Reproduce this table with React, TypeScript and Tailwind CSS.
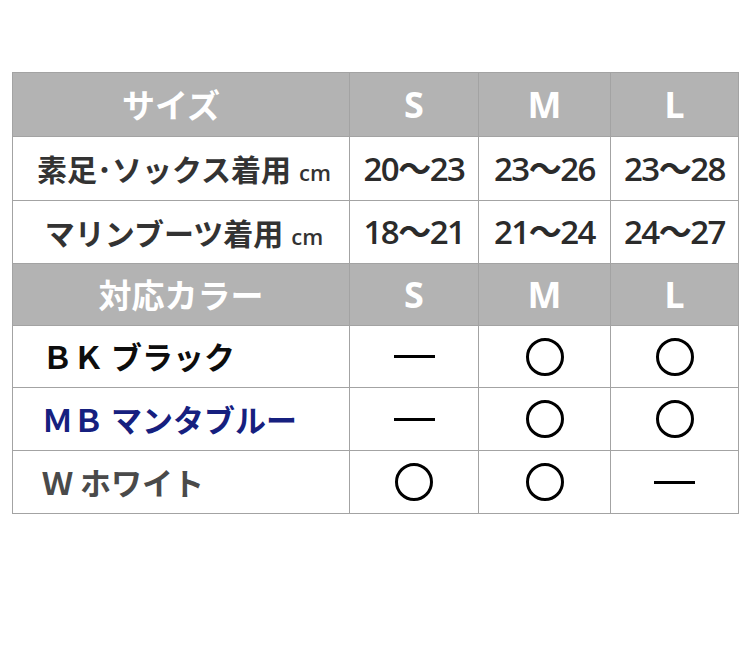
const jp = "font-['Noto_Sans_CJK_JP',sans-serif]";
const latin = "font-['Open_Sans','Noto_Sans_CJK_JP',sans-serif]";

const sizeRows = [
  { label: "素足･ソックス着用", values: ["20〜23", "23〜26", "23〜28"] },
  { label: "マリンブーツ着用", values: ["18〜21", "21〜24", "24〜27"] },
];

const colorRows = [
  { code: "ＢＫ", name: "ブラック", color: "text-[#0d0d0d]", marks: ["dash", "circle", "circle"] },
  { code: "ＭＢ", name: "マンタブルー", color: "text-[#16207f]", marks: ["dash", "circle", "circle"] },
  { code: "Ｗ", name: "ホワイト", color: "text-[#4a4a4a]", marks: ["circle", "circle", "dash"] },
];

function Mark({ type }: { type: string }) {
  if (type === "circle") {
    return <div className="w-[38px] h-[38px] rounded-full border-[3px] border-black" />;
  }
  return <div className="w-[41px] h-[3px] bg-black" />;
}

function HeaderRow({ title, h, shift }: { title: string; h: string; shift?: boolean }) {
  return (
    <>
      <div className={`${h} bg-[#b3b3b3] flex items-center justify-center text-white text-[33px] font-bold ${shift ? "pr-[20px]" : ""} ${jp}`}>
        {title}
      </div>
      {["S", "M", "L"].map((s) => (
        <div key={s} className={`${h} bg-[#b3b3b3] flex items-center justify-center text-white text-[36px] font-bold ${latin}`}>
          {s}
        </div>
      ))}
    </>
  );
}

export default function App() {
  return (
    <div className="w-[750px] h-[654px] bg-white pt-[72px] pl-[12px]">
      <div className="grid grid-cols-[336px_128px_131px_127px] gap-px bg-[#a3a3a3] p-px w-[727px]">
        <HeaderRow title="サイズ" h="h-[63px]" shift />
        {sizeRows.map((row, i) => (
          <div key={row.label} className="contents">
            <div className={`${i === 0 ? "h-[63px]" : "h-[62px]"} bg-white flex items-center justify-center pl-[6px] text-[#333] font-bold ${jp}`}>
              <span className="text-[30px]">{row.label}</span>
              <span className={`text-[22px] font-semibold ml-[8px] mt-[8px] ${latin}`}>cm</span>
            </div>
            {row.values.map((v) => (
              <div key={v} className={`bg-white flex items-center justify-center text-[#2b2b2b] text-[33px] font-semibold tracking-[-1.5px] ${latin}`}>
                {v}
              </div>
            ))}
          </div>
        ))}
        <HeaderRow title="対応カラー" h="h-[61px]" />
        {colorRows.map((row, i) => (
          <div key={row.code} className="contents">
            <div className={`${i === 0 ? "h-[61px]" : "h-[62px]"} bg-white flex items-center pl-[29px] text-[31px] font-bold ${row.color} ${jp}`}>
              {row.code} {row.name}
            </div>
            {row.marks.map((m, j) => (
              <div key={j} className="bg-white flex items-center justify-center">
                <Mark type={m} />
              </div>
            ))}
          </div>
        ))}
      </div>
    </div>
  );
}
